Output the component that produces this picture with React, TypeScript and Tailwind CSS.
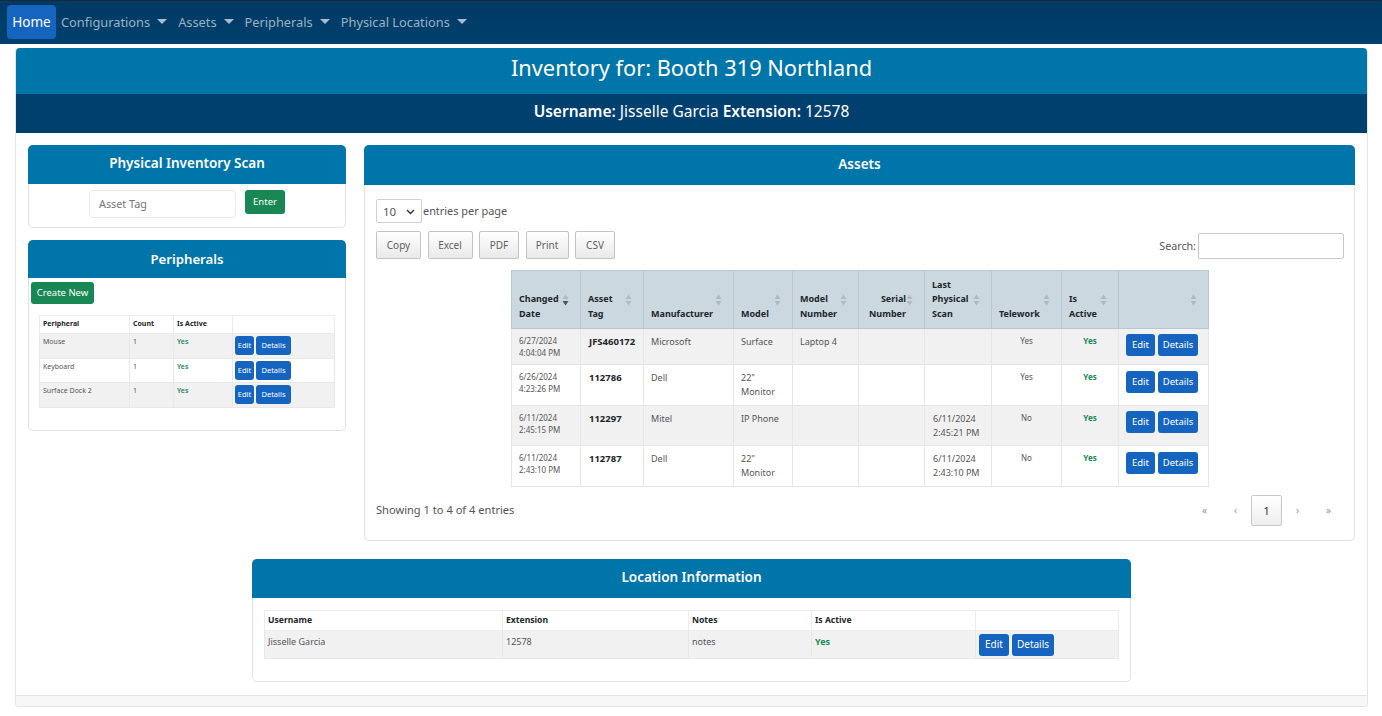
import React from 'react';

const font = { fontFamily: '"Noto Sans", "Open Sans", sans-serif' };

const navItems = ['Configurations', 'Assets', 'Peripherals', 'Physical Locations'];

const assets = [
  { date: '6/27/2024', time: '4:04:04 PM', tag: 'JFS460172', maker: 'Microsoft', model: ['Surface'], number: 'Laptop 4', scan: [], telework: 'Yes', height: 'h-[36px]', btn: 'pt-[5px]' },
  { date: '6/26/2024', time: '4:23:26 PM', tag: '112786', maker: 'Dell', model: ['22"', 'Monitor'], number: '', scan: [], telework: 'Yes', height: 'h-[41px]', btn: 'pt-[6px]' },
  { date: '6/11/2024', time: '2:45:15 PM', tag: '112297', maker: 'Mitel', model: ['IP Phone'], number: '', scan: ['6/11/2024', '2:45:21 PM'], telework: 'No', height: 'h-[40px]', btn: 'pt-[5px]' },
  { date: '6/11/2024', time: '2:43:10 PM', tag: '112787', maker: 'Dell', model: ['22"', 'Monitor'], number: '', scan: ['6/11/2024', '2:43:10 PM'], telework: 'No', height: 'h-[41px]', btn: 'pt-[6px]' },
];

const assetColumns = [
  { label: ['Changed', 'Date'], width: 'w-[69px]', icon: 'desc' },
  { label: ['Asset', 'Tag'], width: 'w-[63px]' },
  { label: ['Manufacturer'], width: 'w-[90px]' },
  { label: ['Model'], width: 'w-[59px]' },
  { label: ['Model', 'Number'], width: 'w-[66px]' },
  { label: ['Serial', 'Number'], width: 'w-[66px]', right: true },
  { label: ['Last', 'Physical', 'Scan'], width: 'w-[67px]' },
  { label: ['Telework'], width: 'w-[70px]' },
  { label: ['Is', 'Active'], width: 'w-[57px]' },
  { label: [], width: 'w-[90px]' },
];

const peripherals = [
  { name: 'Mouse', bg: 'bg-[#f1f1f1]' },
  { name: 'Keyboard', bg: 'bg-white' },
  { name: 'Surface Dock 2', bg: 'bg-[#f1f1f1]' },
];

const SortIcon: React.FC<{ active?: boolean }> = ({ active }) => (
  <svg width="7" height="12" viewBox="0 0 7 12" className="absolute right-[11px] top-[23px]">
    <path d="M3.5 0.5L6.5 5H0.5z" fill="#adbac4" />
    <path d="M3.5 11.5L6.5 7H0.5z" fill={active ? '#4a5560' : '#adbac4'} />
  </svg>
);

const Caret = () => (
  <svg width="10" height="5" viewBox="0 0 10 5" className="ml-[7px] mt-[-2px]">
    <path d="M0 0h10L5 5z" fill="#a9bccb" />
  </svg>
);

const CardHeader: React.FC<{ title: string; className?: string }> = ({ title, className }) => (
  <div className={`-mx-px flex items-center justify-center rounded-t-[5px] bg-[#0075aa] text-white font-semibold ${className}`}>
    {title}
  </div>
);

const ActionButtons: React.FC<{ size: 'xs' | 'sm' | 'md' }> = ({ size }) => {
  const styles = {
    xs: { gap: 'gap-[2px]', edit: 'w-[19px] h-[19px]', details: 'w-[35px] h-[19px]', text: 'text-[7.5px]' },
    sm: { gap: 'gap-[3px]', edit: 'w-[29px] h-[22px]', details: 'w-[40px] h-[22px]', text: 'text-[9.5px]' },
    md: { gap: 'gap-[3px]', edit: 'w-[30px] h-[22px]', details: 'w-[42px] h-[22px]', text: 'text-[10px]' },
  }[size];
  return (
    <div className={`flex ${styles.gap}`}>
      <button className={`${styles.edit} ${styles.text} flex items-center justify-center rounded-[3px] bg-[#1565c0] text-white`}>Edit</button>
      <button className={`${styles.details} ${styles.text} flex items-center justify-center rounded-[3px] bg-[#1565c0] text-white`}>Details</button>
    </div>
  );
};

const ExportButton: React.FC<{ label: string; width: string }> = ({ label, width }) => (
  <button className={`${width} h-[28px] rounded-[2px] border border-[#c4c4c4] bg-gradient-to-b from-white to-[#e9e9e9] text-[10px] text-[#5f5f5f]`}>
    {label}
  </button>
);

const App: React.FC = () => {
  return (
    <div style={font} className="h-[716px] overflow-hidden bg-white text-[#555]">
      {/* Top nav */}
      <nav className="flex h-[44px] items-center gap-[5px] border-t border-[#1a2a38] bg-gradient-to-b from-[#003a63] to-[#00406e] pb-[1px] pl-[7px]">
        <a className="flex h-[34px] w-[49px] items-center justify-center rounded-[4px] bg-[#1565c0] text-[13.5px] text-white">Home</a>
        <div className="mt-[1px] flex items-center gap-[11px]">
          {navItems.map(item => (
            <a key={item} className="flex items-center text-[12.8px] text-[#9db2c2]">
              {item}
              <Caret />
            </a>
          ))}
        </div>
      </nav>

      <main className="pl-[15px] pr-[14px] pt-[4px]">
        <div className="rounded-[4px] border-x border-b border-[#e4e4e4]">
          <div className="flex h-[46px] items-center justify-center rounded-t-[4px] bg-[#0075aa] pb-[5px] text-[21.8px] text-white">
            Inventory for: Booth 319 Northland
          </div>
          <div className="flex h-[39px] items-center justify-center gap-[4px] bg-[#00406e] pb-[4px] text-[15.5px] text-white">
            <span className="font-semibold">Username:</span>
            <span>Jisselle Garcia</span>
            <span className="font-semibold">Extension:</span>
            <span>12578</span>
          </div>

          <div className="flex items-start gap-[18px] px-[12px] pt-[12px]">
            {/* Left column */}
            <div className="flex w-[318px] shrink-0 flex-col gap-[12px]">
              <section className="h-[83px] rounded-[5px] border-x border-b border-[#e2e2e2]">
                <CardHeader title="Physical Inventory Scan" className="h-[39px] pb-[2px] text-[13.5px]" />
                <div className="flex items-start justify-center gap-[9px] pt-[6px]">
                  <div className="flex h-[28px] w-[147px] items-center rounded-[4px] border border-[#eaeaea] pl-[9px] text-[10.8px] text-[#777]">Asset Tag</div>
                  <button className="h-[24px] w-[40px] rounded-[3px] bg-[#198754] text-[9.5px] text-white">Enter</button>
                </div>
              </section>

              <section className="h-[191px] rounded-[5px] border-x border-b border-[#e2e2e2]">
                <CardHeader title="Peripherals" className="h-[38px] pt-[1px] text-[13.2px]" />
                <button className="ml-[2px] mt-[4px] block h-[22px] w-[63px] rounded-[3px] bg-[#198754] pt-[1px] text-[9.5px] text-white">Create New</button>
                <table className="ml-[10px] mt-[11px] w-[296px] table-fixed border-collapse text-[7px]">
                  <colgroup>
                    <col className="w-[90px]" />
                    <col className="w-[44px]" />
                    <col className="w-[59px]" />
                    <col />
                  </colgroup>
                  <thead>
                    <tr className="h-[18px] text-left font-bold text-[#212529]">
                      <th className="border border-[#ececec] pl-[3px]">Peripheral</th>
                      <th className="border border-[#ececec] pl-[3px]">Count</th>
                      <th className="border border-[#ececec] pl-[3px]">Is Active</th>
                      <th className="border border-[#ececec]" />
                    </tr>
                  </thead>
                  <tbody>
                    {peripherals.map(row => (
                      <tr key={row.name} className={`h-[24.6px] ${row.bg}`}>
                        <td className="border border-[#e8e8e8] pl-[3px] pt-[3px] align-top">{row.name}</td>
                        <td className="border border-[#e8e8e8] pl-[3px] pt-[3px] align-top">1</td>
                        <td className="border border-[#e8e8e8] pl-[3px] pt-[3px] align-top font-semibold text-[#198754]">Yes</td>
                        <td className="border border-[#e8e8e8] pl-[2px] align-middle">
                          <ActionButtons size="xs" />
                        </td>
                      </tr>
                    ))}
                  </tbody>
                </table>
              </section>
            </div>

            {/* Assets card */}
            <section className="h-[396px] w-[991px] shrink-0 rounded-[5px] border-x border-b border-[#e2e2e2]">
              <CardHeader title="Assets" className="h-[40px] pb-[2px] text-[13.5px]" />
              <div className="pl-[11px] pr-[10px] pt-[14px]">
                <div className="flex h-[24px] items-center text-[10.9px]">
                  <div className="flex h-[24px] w-[46px] items-center justify-between rounded-[2px] border border-[#d0d0d0] px-[6px] pt-[1px] text-[11.5px]">
                    <span>10</span>
                    <svg width="9" height="6" viewBox="0 0 9 6">
                      <path d="M1 1l3.5 3.5L8 1" fill="none" stroke="#333" strokeWidth="1.4" />
                    </svg>
                  </div>
                  <span className="ml-[1px] mt-[1px]">entries per page</span>
                </div>

                <div className="mt-[8px] flex items-start justify-between">
                  <div className="flex gap-[6.5px]">
                    <ExportButton label="Copy" width="w-[45px]" />
                    <ExportButton label="Excel" width="w-[45px]" />
                    <ExportButton label="PDF" width="w-[40px]" />
                    <ExportButton label="Print" width="w-[43px]" />
                    <ExportButton label="CSV" width="w-[40px]" />
                  </div>
                  <div className="mt-[2px] flex items-center gap-[2px] text-[10.7px]">
                    <span>Search:</span>
                    <div className="h-[26px] w-[146px] rounded-[2px] border border-[#c8c8c8]" />
                  </div>
                </div>

                <table className="ml-[135px] mt-[11px] w-[697px] table-fixed border-collapse text-[9px]">
                  <colgroup>
                    {assetColumns.map((col, i) => (
                      <col key={i} className={col.width} />
                    ))}
                  </colgroup>
                  <thead>
                    <tr className="h-[58px] bg-[#cbd8e0] text-[#212529]">
                      {assetColumns.map((col, i) => (
                        <th key={i} className="relative border border-[#b8c7d1] pb-[7px] pl-[7px] pr-[18px] align-bottom font-bold">
                          <div className={`leading-[14.3px] ${col.right ? 'text-right' : 'text-left'}`}>
                            {col.label.map(line => (
                              <div key={line}>{line}</div>
                            ))}
                          </div>
                          <SortIcon active={col.icon === 'desc'} />
                        </th>
                      ))}
                    </tr>
                  </thead>
                  <tbody>
                    {assets.map((row, i) => (
                      <tr key={row.tag} className={`${row.height} ${i % 2 === 0 ? 'bg-[#f1f1f1]' : 'bg-white'}`}>
                        <td className="border border-[#e6e6e6] pl-[7px] pt-[6px] align-top text-[8px] leading-[12px]">
                          <div>{row.date}</div>
                          <div>{row.time}</div>
                        </td>
                        <td className="border border-[#e6e6e6] pl-[8px] pt-[7px] align-top text-[9.5px] font-bold leading-[12px] text-[#212529]">{row.tag}</td>
                        <td className="border border-[#e6e6e6] pl-[7px] pt-[7px] align-top leading-[12px]">{row.maker}</td>
                        <td className="border border-[#e6e6e6] pl-[7px] pt-[6px] align-top leading-[14px]">
                          {row.model.map(line => (
                            <div key={line}>{line}</div>
                          ))}
                        </td>
                        <td className="border border-[#e6e6e6] pl-[7px] pt-[7px] align-top leading-[12px]">{row.number}</td>
                        <td className="border border-[#e6e6e6]" />
                        <td className="border border-[#e6e6e6] pl-[8px] pt-[6px] align-top leading-[14px]">
                          {row.scan.map(line => (
                            <div key={line}>{line}</div>
                          ))}
                        </td>
                        <td className="border border-[#e6e6e6] pt-[6px] text-center align-top text-[8px] leading-[12px]">{row.telework}</td>
                        <td className="border border-[#e6e6e6] pt-[6px] text-center align-top text-[8px] font-bold leading-[12px] text-[#198754]">Yes</td>
                        <td className={`border border-[#e6e6e6] pl-[7px] align-top ${row.btn}`}>
                          <ActionButtons size="sm" />
                        </td>
                      </tr>
                    ))}
                  </tbody>
                </table>

                <div className="mt-[8px] flex items-center justify-between text-[11.1px]">
                  <span>Showing 1 to 4 of 4 entries</span>
                  <div className="flex items-center text-[10px] text-[#999]">
                    <span className="w-[31px] text-center">«</span>
                    <span className="w-[31px] text-center">‹</span>
                    <span className="flex h-[31px] w-[31px] items-center justify-center rounded-[2px] border border-[#c8c8c8] bg-gradient-to-b from-white to-[#eeeeee] text-[11.5px] text-[#333]">1</span>
                    <span className="w-[31px] text-center">›</span>
                    <span className="w-[31px] text-center">»</span>
                  </div>
                </div>
              </div>
            </section>
          </div>

          {/* Location information */}
          <section className="ml-[236px] mt-[18px] h-[123px] w-[879px] rounded-[5px] border-x border-b border-[#e2e2e2]">
            <CardHeader title="Location Information" className="h-[39px] pb-[2px] text-[13.5px]" />
            <table className="ml-[11px] mt-[12px] w-[855px] table-fixed border-collapse text-[9px]">
              <colgroup>
                <col className="w-[238px]" />
                <col className="w-[186px]" />
                <col className="w-[123px]" />
                <col className="w-[164px]" />
                <col />
              </colgroup>
              <thead>
                <tr className="h-[20px] text-left text-[8.6px] font-bold text-[#212529]">
                  <th className="border border-[#ececec] pl-[3px]">Username</th>
                  <th className="border border-[#ececec] pl-[3px]">Extension</th>
                  <th className="border border-[#ececec] pl-[3px]">Notes</th>
                  <th className="border border-[#ececec] pl-[3px]">Is Active</th>
                  <th className="border border-[#ececec]" />
                </tr>
              </thead>
              <tbody>
                <tr className="h-[28px] bg-[#f1f1f1]">
                  <td className="border border-[#e8e8e8] pl-[3px] pt-[4px] align-top">Jisselle Garcia</td>
                  <td className="border border-[#e8e8e8] pl-[3px] pt-[4px] align-top">12578</td>
                  <td className="border border-[#e8e8e8] pl-[3px] pt-[4px] align-top">notes</td>
                  <td className="border border-[#e8e8e8] pl-[3px] pt-[4px] align-top font-bold text-[#198754]">Yes</td>
                  <td className="border border-[#e8e8e8] pl-[3px] align-middle">
                    <ActionButtons size="md" />
                  </td>
                </tr>
              </tbody>
            </table>
          </section>
          <div className="mt-[13px] h-[11px] rounded-b-[4px] border-t border-[#e4e4e4] bg-[#f7f7f7]" />
        </div>
      </main>
    </div>
  );
};

export default App;
